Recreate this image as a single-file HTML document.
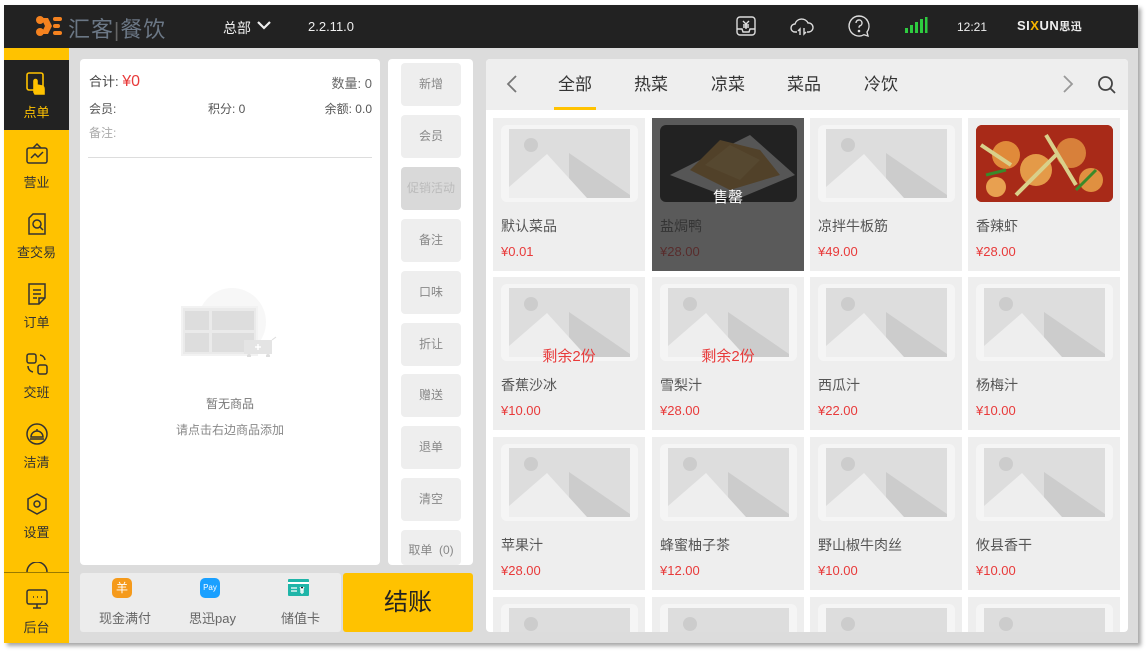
<!DOCTYPE html>
<html><head><meta charset="utf-8"><style>
*{margin:0;padding:0;box-sizing:border-box}
body{width:1147px;height:651px;background:#fff;position:relative;overflow:hidden;font-family:"Liberation Sans","Noto Sans CJK SC",sans-serif}
.a{position:absolute}
#app{left:4px;top:5px;width:1134px;height:638px;background:#dcdcdc;box-shadow:3px 3px 4px rgba(0,0,0,.35);overflow:hidden}
#top{left:0;top:0;width:1134px;height:43px;background:#222}
#side{left:0;top:43px;width:65px;height:595px;background:#ffc200}
.si{position:absolute;left:0;width:65px;text-align:center;font-size:13px;color:#333}
.si svg{display:block;margin:0 auto 6px}
.btn{position:absolute;left:397px;width:60px;height:43px;background:#eee;border-radius:4px;color:#888;font-size:12px;text-align:center;line-height:43px}
.tile{position:absolute;width:152px;height:153px;background:#eee;overflow:hidden}
.ph{position:absolute;left:8px;top:7px;width:137px;height:77px;background:#f5f5f5;border-radius:6px}
.ph .im{position:absolute;left:8px;top:4px;width:121px;height:69px;background:#ddd;overflow:hidden}
.nm{position:absolute;left:8px;top:98px;font-size:14px;color:#555}
.pr{position:absolute;left:8px;top:126px;font-size:13px;color:#e83a3a}
.rem{position:absolute;left:0;width:152px;top:68px;text-align:center;color:#e83a3a;font-size:15px}
.tab{position:absolute;top:11px;font-size:17px;color:#333}
</style></head><body>
<div id="app" class="a">
 <div id="top" class="a">
  <svg class="a" style="left:31px;top:10px" width="28" height="22" viewBox="0 0 28 22"><g fill="#f5821f"><circle cx="5" cy="5" r="4"/><circle cx="5" cy="17" r="4"/><path d="M6 3h7l4 8-4 8H6l4-8z"/><rect x="18" y="2" width="9" height="4" rx="2"/><rect x="18" y="9" width="7" height="4" rx="2"/><rect x="18" y="16" width="9" height="4" rx="2"/></g></svg>
  <div class="a" style="left:64px;top:7px;font-size:22px;color:#6b7785;letter-spacing:1px">汇客<span style="font-size:20px;color:#666">|</span>餐饮</div>
  <div class="a" style="left:219px;top:13px;font-size:14px;color:#eee">总部</div>
  <svg class="a" style="left:253px;top:15px" width="14" height="10"><path d="M1 2l6 6 6-6" stroke="#eee" stroke-width="2.2" fill="none"/></svg>
  <div class="a" style="left:304px;top:14px;font-size:13px;color:#eee">2.2.11.0</div>
  <svg class="a" style="left:731px;top:10px" width="22" height="22" viewBox="0 0 22 22" fill="none" stroke="#ddd" stroke-width="1.4"><rect x="2" y="2" width="18" height="18" rx="3"/><path d="M2 14h5l1 3h6l1-3h5M8 6l3 3 3-3M11 9v5M8 10h6M8 12h6"/></svg>
  <svg class="a" style="left:786px;top:10px" width="24" height="22" viewBox="0 0 24 22" fill="none" stroke="#ddd" stroke-width="1.4"><path d="M7 17H5a4 4 0 0 1 0-8 7 7 0 0 1 13-1 4.5 4.5 0 0 1 1 9h-2"/><path d="M10 20v-6l-2 2M14 13v6l2-2"/></svg>
  <svg class="a" style="left:843px;top:9px" width="24" height="24" viewBox="0 0 24 24" fill="none" stroke="#ddd" stroke-width="1.4"><path d="M12 2a10 10 0 1 0 5 18.7l4 1.3-1-4A10 10 0 0 0 12 2z"/><path d="M9 9a3 3 0 1 1 4 2.8c-.8.4-1 1-1 2"/><circle cx="12" cy="17" r=".6" fill="#ddd"/></svg>
  <svg class="a" style="left:900px;top:12px" width="24" height="18"><g fill="#2ecc40"><rect x="1" y="11" width="3" height="5"/><rect x="6" y="8" width="3" height="8"/><rect x="11" y="5" width="3" height="11"/><rect x="16" y="2" width="3" height="14"/><rect x="21" y="0" width="2.5" height="16"/></g></svg>
  <div class="a" style="left:953px;top:15px;font-size:12px;color:#eee">12:21</div>
  <div class="a" style="left:1013px;top:13px;font-size:13px;font-weight:bold;color:#eee;letter-spacing:.5px">SI<span style="color:#f5b400">X</span>UN<span style="font-size:11px">思迅</span></div>
 </div>
 <div id="side" class="a">
  <div class="a" style="left:0;top:12px;width:65px;height:70px;background:#222"></div>
  <div class="si" style="top:24px;color:#ffc200"><svg width="22" height="24" viewBox="0 0 22 24" fill="none" stroke="#ffc200" stroke-width="1.6"><rect x="1" y="1" width="16" height="17" rx="2"/><path d="M8 20V9a1.5 1.5 0 0 1 3 0v4l5 1a3 3 0 0 1 2 3v5H9z" fill="#ffc200"/></svg>点单</div>
  <div class="si" style="top:94px"><svg width="24" height="24" viewBox="0 0 24 24" fill="none" stroke="#333" stroke-width="1.5"><rect x="2" y="6" width="20" height="15" rx="2"/><path d="M8 6l4-4 4 4M6 16l4-4 3 3 5-5"/></svg>营业</div>
  <div class="si" style="top:164px"><svg width="24" height="24" viewBox="0 0 24 24" fill="none" stroke="#333" stroke-width="1.5"><path d="M8 2h12v20H4V6z"/><circle cx="12" cy="12" r="4"/><path d="M15 15l3 3"/></svg>查交易</div>
  <div class="si" style="top:234px"><svg width="24" height="24" viewBox="0 0 24 24" fill="none" stroke="#333" stroke-width="1.5"><path d="M4 2h16v14l-6 6H4z"/><path d="M8 8h8M8 12h8M8 16h4M14 22v-6h6"/></svg>订单</div>
  <div class="si" style="top:304px"><svg width="24" height="24" viewBox="0 0 24 24" fill="none" stroke="#333" stroke-width="1.5"><rect x="2" y="2" width="9" height="9" rx="2"/><rect x="13" y="13" width="9" height="9" rx="2"/><path d="M15 3a6 6 0 0 1 5 5M3 14a6 6 0 0 0 5 6"/></svg>交班</div>
  <div class="si" style="top:374px"><svg width="24" height="24" viewBox="0 0 24 24" fill="none" stroke="#333" stroke-width="1.5"><circle cx="12" cy="12" r="10"/><path d="M6 15a6 6 0 0 1 12 0zM5 17h14M12 7v2"/></svg>洁清</div>
  <div class="si" style="top:444px"><svg width="24" height="24" viewBox="0 0 24 24" fill="none" stroke="#333" stroke-width="1.5"><path d="M12 2l9 5v10l-9 5-9-5V7z"/><circle cx="12" cy="12" r="3"/></svg>设置</div>
  <svg class="a" style="left:21px;top:514px" width="24" height="10" viewBox="0 0 24 10" fill="none" stroke="#333" stroke-width="1.5"><path d="M2 10a10 10 0 0 1 20 0"/></svg>
  <div class="a" style="left:0;top:524px;width:65px;height:1px;background:#9a7a00"></div>
  <div class="si" style="top:539px"><svg width="24" height="24" viewBox="0 0 24 24" fill="none" stroke="#333" stroke-width="1.5"><rect x="2" y="3" width="20" height="14" rx="2"/><path d="M8 21h8M12 17v4M8 10h1M12 10h1M16 10h1"/></svg>后台</div>
 </div>
 <div class="a" style="left:76px;top:54px;width:300px;height:506px;background:#fff;border-radius:4px">
  <div class="a" style="left:9px;top:12px;font-size:13px;color:#444">合计: <span style="color:#e83a3a;font-size:16px">¥0</span></div>
  <div class="a" style="right:8px;top:14px;font-size:13px;color:#666">数量: 0</div>
  <div class="a" style="left:9px;top:41px;font-size:12px;color:#555">会员:</div>
  <div class="a" style="left:128px;top:41px;font-size:12px;color:#555">积分: 0</div>
  <div class="a" style="right:8px;top:41px;font-size:12px;color:#555">余额: 0.0</div>
  <div class="a" style="left:9px;top:65px;font-size:12px;color:#aaa">备注:</div>
  <div class="a" style="left:8px;top:98px;width:284px;height:1px;background:#ddd"></div>
  <svg class="a" style="left:92px;top:228px" width="115" height="70" viewBox="0 0 115 70"><circle cx="60" cy="35" r="34" fill="#f7f7f7"/><rect x="10" y="20" width="75" height="48" fill="#eaeaea" stroke="#f2f2f2" stroke-width="2"/><rect x="13" y="24" width="24" height="19" fill="#ddd"/><rect x="40" y="24" width="42" height="19" fill="#ddd"/><rect x="13" y="46" width="24" height="19" fill="#ddd"/><rect x="40" y="46" width="42" height="19" fill="#ddd"/><rect x="72" y="53" width="28" height="14" fill="#e4e4e4"/><path d="M100 53l4-3" stroke="#ddd"/><circle cx="77" cy="69" r="2" fill="#ddd"/><circle cx="96" cy="69" r="2" fill="#ddd"/><path d="M86 57v6M83 60h6" stroke="#fff" stroke-width="1.5"/></svg>
  <div class="a" style="left:0;width:300px;top:336px;text-align:center;font-size:12px;color:#777">暂无商品</div>
  <div class="a" style="left:0;width:300px;top:362px;text-align:center;font-size:12px;color:#888">请点击右边商品添加</div>
 </div>
 <div class="a" style="left:384px;top:54px;width:85px;height:506px;background:#fff;border-radius:4px"></div>
 <div class="btn" style="top:58px">新增</div>
 <div class="btn" style="top:110px">会员</div>
 <div class="btn" style="top:162px;background:#d9d9d9;color:#bbb">促销活动</div>
 <div class="btn" style="top:214px">备注</div>
 <div class="btn" style="top:266px">口味</div>
 <div class="btn" style="top:318px">折让</div>
 <div class="btn" style="top:369px">赠送</div>
 <div class="btn" style="top:421px">退单</div>
 <div class="btn" style="top:473px">清空</div>
 <div class="btn" style="top:525px;height:35px;line-height:40px">取单 &nbsp;(0)</div>
 <div class="a" style="left:76px;top:568px;width:261px;height:59px;background:#ececec;border-radius:3px"></div>
 <div class="a" style="left:108px;top:573px;width:20px;height:20px;border-radius:5px;background:#f59a1b;color:#fff;font-size:12px;text-align:center;line-height:20px">羊</div>
 <div class="a" style="left:196px;top:573px;width:20px;height:20px;border-radius:5px;background:#1aa0ff;color:#fff;font-size:8px;text-align:center;line-height:20px">Pay</div>
 <svg class="a" style="left:284px;top:574px" width="21" height="17"><rect width="21" height="17" rx="1" fill="#1fb5a8"/><rect y="3" width="21" height="2" fill="#fff"/><path d="M3 9h6M3 12h6M12 8l2 3 2-3M14 11v4M12 11h4M12 13h4" stroke="#fff" stroke-width="1.2"/></svg>
 <div class="a" style="left:95px;top:603px;font-size:13px;color:#666">现金满付</div>
 <div class="a" style="left:185px;top:603px;font-size:13px;color:#666">思迅pay</div>
 <div class="a" style="left:277px;top:603px;font-size:13px;color:#666">储值卡</div>
 <div class="a" style="left:339px;top:568px;width:130px;height:59px;background:#ffc200;border-radius:3px;text-align:center;line-height:59px;font-size:24px;color:#222">结账</div>
 <div class="a" style="left:482px;top:54px;width:642px;height:573px;background:#fff;border-radius:4px;overflow:hidden">
  <div class="a" style="left:0;top:0;width:642px;height:51px;background:#eee"></div>
  <svg class="a" style="left:20px;top:15px" width="12" height="20"><path d="M10 2L2 10l8 8" stroke="#777" stroke-width="1.8" fill="none"/></svg>
  <div class="tab" style="left:72px">全部</div>
  <div class="a" style="left:68px;top:48px;width:42px;height:3px;background:#ffc200"></div>
  <div class="tab" style="left:148px">热菜</div>
  <div class="tab" style="left:225px">凉菜</div>
  <div class="tab" style="left:301px">菜品</div>
  <div class="tab" style="left:378px">冷饮</div>
  <svg class="a" style="left:576px;top:15px" width="12" height="20"><path d="M2 2l8 8-8 8" stroke="#999" stroke-width="1.8" fill="none"/></svg>
  <svg class="a" style="left:611px;top:16px" width="20" height="20" fill="none" stroke="#444" stroke-width="1.8"><circle cx="8.5" cy="8.5" r="6.5"/><path d="M13 13l5 5"/></svg>
 </div>
 <div id="grid"></div>
</div>
<script>
var P='<div class="ph"><div class="im"><svg width="121" height="69" viewBox="0 0 121 69"><circle cx="22" cy="16" r="7" fill="#ccc"/><path d="M60 24l61 42v3H60z" fill="#ccc"/><path d="M0 58l38-33 40 44H0z" fill="#eee"/></svg></div></div>';
var items=[["默认菜品","¥0.01",0],["盐焗鸭","¥28.00",1],["凉拌牛板筋","¥49.00",0],["香辣虾","¥28.00",2],
["香蕉沙冰","¥10.00",3],["雪梨汁","¥28.00",3],["西瓜汁","¥22.00",0],["杨梅汁","¥10.00",0],
["苹果汁","¥28.00",0],["蜂蜜柚子茶","¥12.00",0],["野山椒牛肉丝","¥10.00",0],["攸县香干","¥10.00",0],
["","",0],["","",0],["","",0],["","",0]];
var xs=[489,648,806,964],ys=[113,272,432,592],h='';
items.forEach(function(it,i){var x=xs[i%4],r=Math.floor(i/4),y=ys[r];var t=it[2];
var ph=P;
if(t==1)ph='<div class="ph" style="background:#111"><svg width="137" height="77" viewBox="0 0 137 77"><path d="M10 50L90 10l45 40-60 25z" fill="#ddd"/><path d="M30 45l30-30 40 10 20 25-50 15z" fill="#c98a2c"/><path d="M45 40l25-20 30 15-20 20z" fill="#e0a84a"/></svg></div>';
if(t==2)ph='<div class="ph" style="background:#b8321c;overflow:hidden"><svg width="137" height="77" viewBox="0 0 137 77"><rect width="137" height="77" fill="#a82a18"/><circle cx="30" cy="30" r="14" fill="#e08a3a"/><circle cx="60" cy="45" r="16" fill="#e49a48"/><circle cx="95" cy="28" r="15" fill="#d8803a"/><circle cx="115" cy="55" r="12" fill="#e09040"/><circle cx="20" cy="62" r="10" fill="#e8a050"/><path d="M5 20l30 20M70 10l30 50M40 70l40-40" stroke="#d9d08a" stroke-width="4"/><path d="M10 50l20-5M100 65l20-20" stroke="#3a8a2a" stroke-width="3"/></svg></div>';
h+='<div class="tile" style="left:'+x+'px;top:'+y+'px'+(r==3?';height:35px':'')+'">'+ph+(it[0]?'<div class="nm">'+it[0]+'</div><div class="pr">'+it[1]+'</div>':'')+(t==3?'<div class="rem">剩余2份</div>':'')+(t==1?'<div style="position:absolute;inset:0;background:rgba(40,40,40,.75)"></div><div style="position:absolute;left:0;width:152px;top:68px;text-align:center;color:#fff;font-size:15px">售罄</div>':'')+'</div>';});
document.getElementById('grid').outerHTML=h;
</script>
</body></html>
